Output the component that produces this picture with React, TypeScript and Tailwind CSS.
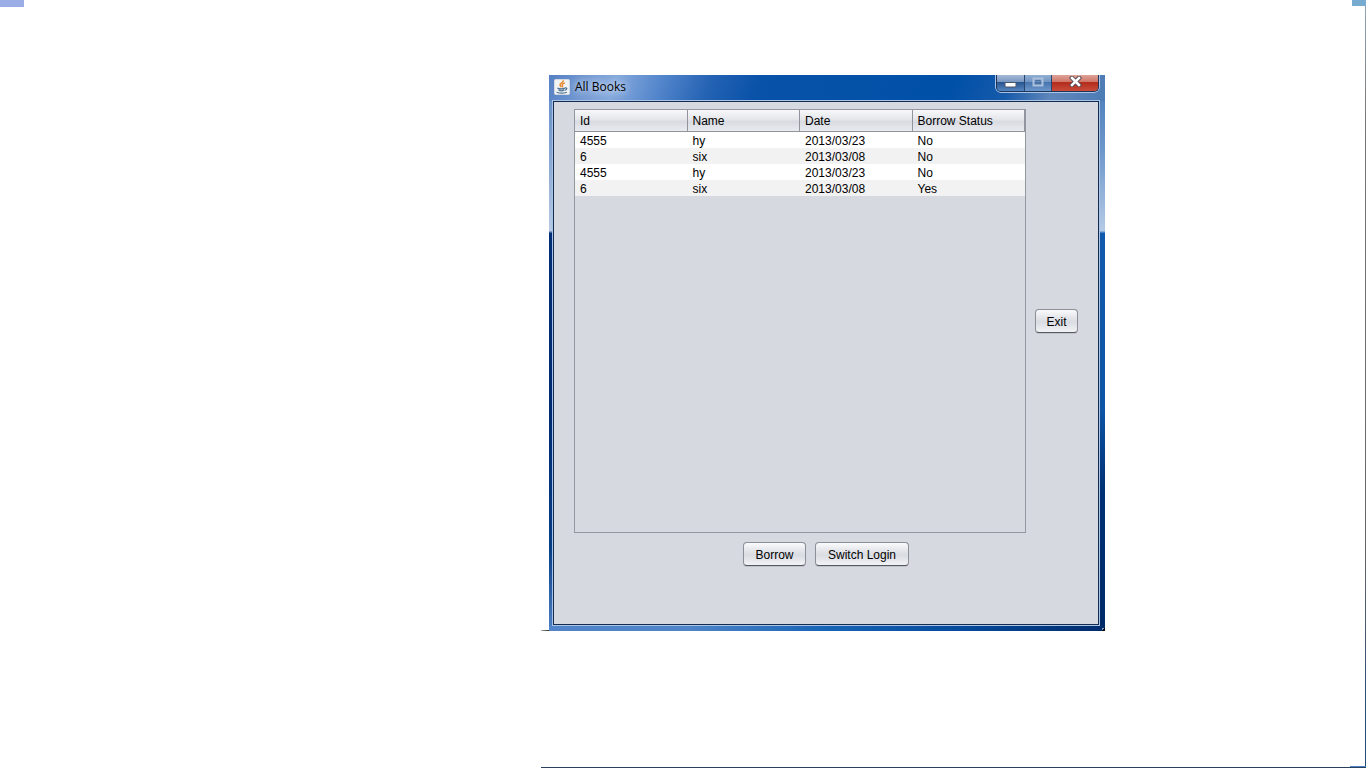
const books = [
  { id: "4555", name: "hy", date: "2013/03/23", status: "No" },
  { id: "6", name: "six", date: "2013/03/08", status: "No" },
  { id: "4555", name: "hy", date: "2013/03/23", status: "No" },
  { id: "6", name: "six", date: "2013/03/08", status: "Yes" },
];

const columns = ["Id", "Name", "Date", "Borrow Status"];

function JavaIcon() {
  return (
    <svg width="16" height="16" viewBox="0 0 16 16" fill="none" aria-hidden="true">
      <rect x="0.5" y="0.5" width="15" height="15" rx="1" fill="#f1f3f5" stroke="#d3dae2" />
      <path d="M9.300 1.300C10 3.400 5.600 4.200 6 6c.2 1 1.200 1.200 1.300 2.300" stroke="#e58a2b" strokeWidth="1.500" />
      <path d="M10.800 3.800C8.500 4.800 7.600 5.700 8.400 6.700c.5.600.2 1.200-.3 1.600" stroke="#e5862a" strokeWidth="1.300" />
      <path d="M3.400 9.200c2 .9 5.400.9 7.600 0M4.600 11.200c1.600.7 4 .7 5.600 0" stroke="#4f7494" strokeWidth="1.300" />
      <path d="M2.600 13.300c2.700 1 7.400 1 10.200-.1M11 9c2.600-.7 2.400 1.700-.3 2.300" stroke="#4f7494" strokeWidth="1.200" />
    </svg>
  );
}

function TitleBar() {
  return (
    <header className="flex h-[25px] items-start justify-between pl-[5px] pr-[6px]">
      <div className="flex h-6 items-center gap-[5px]">
        <JavaIcon />
        <h1 className="font-['Open_Sans',sans-serif] text-[12px] leading-4 text-black [text-shadow:0_0_6px_#d5e3f6,0_0_10px_#c5d7f0,0_0_14px_#b5cbea]">
          All Books
        </h1>
      </div>
      <div className="flex h-[17px] overflow-hidden rounded-b-[5px] border border-t-0 border-[#1d3558] shadow-[0_1px_0_#a9c4e6,1px_0_0_#a9c4e6,-1px_0_0_#a9c4e6]">
        <button aria-label="Minimize" className="flex w-7 items-center justify-center border-r border-[#27466f] bg-[linear-gradient(#a5b9d5_0%,#7695c1_45%,#29558f_46%,#5686c2_100%)]">
          <svg width="13" height="8" viewBox="0 0 13 8" className="mt-[3px]">
            <rect x="1" y="1.500" width="11" height="4.500" rx="1" fill="#fff" stroke="#4b5568" />
          </svg>
        </button>
        <button aria-label="Maximize" disabled className="flex w-[27px] items-center justify-center border-r border-[#27466f] bg-[linear-gradient(#91aed2_0%,#6f93c2_45%,#4674ae_46%,#6c97cc_100%)]">
          <svg width="12" height="10" viewBox="0 0 12 10" fill="none" className="mb-[2px]">
            <rect x="1.500" y="1.500" width="9" height="7" stroke="#abc0db" strokeWidth="2" />
            <rect x="4" y="3.500" width="4" height="3" stroke="#4b719f" />
          </svg>
        </button>
        <button aria-label="Close" className="flex w-[46px] items-center justify-center bg-[linear-gradient(#dea397_0%,#cf7466_45%,#b32c1c_46%,#c84c3a_100%)]">
          <svg width="13" height="11" viewBox="0 0 13 11" fill="none" className="mb-[3px]">
            <path d="M3 2l7 7M10 2l-7 7" stroke="#4d4652" strokeWidth="4.400" strokeLinecap="square" />
            <path d="M3 2l7 7M10 2l-7 7" stroke="#fff" strokeWidth="2.600" strokeLinecap="square" />
          </svg>
        </button>
      </div>
    </header>
  );
}

function PushButton({ children, width }: { children: string; width: string }) {
  return (
    <button
      className={`${width} h-6 shrink-0 rounded-[4px] border border-[#8b8f98] border-b-[#55595f] bg-[linear-gradient(#fbfbfc_0%,#e6e8ec_30%,#d9dce2_55%,#f2f3f6_100%)] pt-px text-center text-[12px] leading-4 whitespace-nowrap text-black shadow-[0_1px_0_#bfc3cb]`}
    >
      {children}
    </button>
  );
}

function BookTable() {
  return (
    <div className="h-[424px] grow border border-[#9297a1] bg-[#d6d9df]">
      <table className="w-full table-fixed border-separate border-spacing-0 text-left text-[12px] leading-4 text-black">
        <thead>
          <tr>
            {columns.map((column) => (
              <th
                key={column}
                scope="col"
                className="h-[22px] border-r border-b border-[#8f949d] bg-[linear-gradient(#f8f8fa_0%,#e4e6ea_45%,#d8dbe1_55%,#e9ebef_100%)] p-0 pl-[5px] font-normal"
              >
                {column}
              </th>
            ))}
          </tr>
        </thead>
        <tbody>
          {books.map((book, index) => (
            <tr key={index} className="h-4 bg-white even:bg-[#f2f2f2]">
              <td className="p-0 pt-[2px] pl-[5px] leading-[14px]">{book.id}</td>
              <td className="p-0 pt-[2px] pl-[5px] leading-[14px]">{book.name}</td>
              <td className="p-0 pt-[2px] pl-[5px] leading-[14px]">{book.date}</td>
              <td className="p-0 pt-[2px] pl-[5px] leading-[14px]">{book.status}</td>
            </tr>
          ))}
        </tbody>
      </table>
    </div>
  );
}

function BooksWindow() {
  return (
    <section className="relative flex h-[556px] w-[556px] flex-col bg-[#00306f] font-['Liberation_Sans',Arial,sans-serif]">
      <div aria-hidden="true" className="absolute inset-y-0 left-0 w-1 bg-[linear-gradient(#5d88c8_0%,#7f9fce_12%,#b6cae4_28%,#032f78_28.500%,#002a72_60%,#063e86_85%,#4f80c4_100%)]" />
      <div aria-hidden="true" className="absolute inset-y-0 right-0 w-[6px] bg-[linear-gradient(#4678b8_0%,#6f98cb_14%,#b4cbe6_28%,#1059ac_28.500%,#0c55a6_60%,#003074_75%,#002a68_100%)]" />
      <div aria-hidden="true" className="absolute inset-x-0 top-0 h-[26px] bg-[linear-gradient(110deg,#5580c3_0%,#86a9dc_12%,#5487cc_20%,#2462b3_29%,#0852a8_38%,#0050a8_72%,#165aaa_82%,#5f86ba_90%,#4c7bb5_100%)]" />
      <div aria-hidden="true" className="absolute inset-x-0 bottom-0 h-[5px] bg-[linear-gradient(90deg,#5184c8_0%,#4f84c8_25%,#1764b6_50%,#05499a_75%,#002c6c_100%)]" />
      <div aria-hidden="true" className="absolute right-0 bottom-0 h-[3px] w-[3px] bg-[linear-gradient(135deg,#7fa3cf_45%,#05080f_50%)]" />
      <div className="relative flex grow flex-col">
        <TitleBar />
        <div className="mr-[5px] mb-[5px] ml-[3px] flex grow border border-[#a9c4e6]">
          <main className="flex grow flex-col gap-[9px] border border-[#142c50] bg-[#d6d9df] px-5 pt-[7px]">
            <div className="flex items-center gap-[9px]">
              <BookTable />
              <PushButton width="w-[43px]">Exit</PushButton>
            </div>
            <div className="flex justify-center gap-[9px]">
              <PushButton width="w-[63px]">Borrow</PushButton>
              <PushButton width="w-[94px]">Switch Login</PushButton>
            </div>
          </main>
        </div>
      </div>
    </section>
  );
}

export default function App() {
  return (
    <div className="relative min-h-screen overflow-hidden bg-white pt-[75px] pl-[549px]">
      <div aria-hidden="true" className="absolute top-0 left-0 h-[7px] w-6 bg-[#9aade6]" />
      <div aria-hidden="true" className="absolute top-0 right-0 h-[6px] w-[14px] bg-[#78abd0]" />
      <div aria-hidden="true" className="absolute top-[6px] right-0 bottom-0 w-px bg-[linear-gradient(#91a4b5_0%,#777_15%,#666_70%,#244a78_95%)]" />
      <div aria-hidden="true" className="absolute right-0 bottom-0 left-[541px] h-px bg-[#29415f]" />
      <div aria-hidden="true" className="absolute right-0 bottom-px h-px w-4 bg-[#4f83c6]" />
      <div aria-hidden="true" className="absolute top-[630px] left-[541px] h-px w-[10px] bg-[linear-gradient(90deg,#aaa,#111)]" />
      <BooksWindow />
    </div>
  );
}
